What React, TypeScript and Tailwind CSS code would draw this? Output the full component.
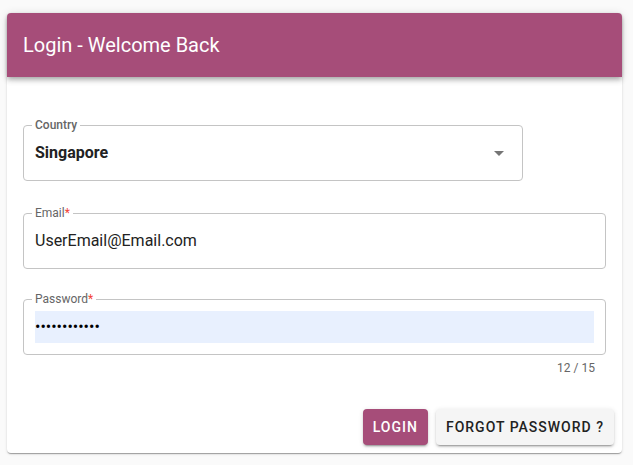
import React from 'react';

const font = { fontFamily: 'Roboto, "Noto Sans", sans-serif' };

const FieldLabel = ({ text, required, medium }: { text: string; required?: boolean; medium?: boolean }) => (
  <span
    className={`absolute -top-[7px] left-[8px] bg-white px-[3px] text-[12px] leading-[12px] text-[#666] ${medium ? 'font-medium' : ''}`}
  >
    {text}
    {required && <span className="text-[#f44336]">*</span>}
  </span>
);

const App = () => {
  return (
    <div className="min-h-[465px] bg-[#fafafa] pl-[7px] pt-[13px]" style={font}>
      <div className="w-[615px] rounded-[4px] bg-white shadow-[0_2px_1px_-1px_rgba(0,0,0,0.2),0_1px_1px_0_rgba(0,0,0,0.14),0_1px_3px_0_rgba(0,0,0,0.12)]">
        <div className="flex h-[64px] items-center rounded-t-[4px] bg-[#a64d79] px-4 shadow-[0_2px_4px_-1px_rgba(0,0,0,0.2),0_4px_5px_0_rgba(0,0,0,0.14),0_1px_10px_0_rgba(0,0,0,0.12)]">
          <h1 className="text-[20px] font-normal text-white">Login - Welcome Back</h1>
        </div>

        <div className="px-4 pt-[48px]">
          {/* Country select */}
          <div className="relative flex h-[56px] w-[500px] items-center rounded-[4px] border border-[#c4c4c4] px-[11px]">
            <FieldLabel text="Country" medium />
            <span className="text-[16px] font-bold text-[#222]">Singapore</span>
            <svg
              className="absolute right-[11px] top-1/2 -translate-y-1/2"
              width="24"
              height="24"
              viewBox="0 0 24 24"
            >
              <path d="M7 10l5 5 5-5z" fill="#757575" />
            </svg>
          </div>

          {/* Email */}
          <div className="relative mt-[32px] flex h-[56px] items-center rounded-[4px] border border-[#c4c4c4] px-[11px]">
            <FieldLabel text="Email" required />
            <span className="text-[16px] text-[#222]">UserEmail@Email.com</span>
          </div>

          {/* Password */}
          <div className="relative mt-[30px] h-[56px] rounded-[4px] border border-[#c4c4c4] p-[11px]">
            <FieldLabel text="Password" required />
            <div className="flex h-[32px] items-center bg-[#e8f0fe] text-[16px] leading-none text-black">
              ••••••••••••
            </div>
          </div>
          <div className="mt-[3px] pr-[11px] text-right text-[12px] leading-[20px] text-[#666]">12 / 15</div>
        </div>

        <div className="mt-[31px] flex justify-end gap-2 p-2 pt-0">
          <button className="h-[36px] rounded-[4px] bg-[#a64d79] px-[10px] text-[14px] font-medium uppercase tracking-[1px] text-white shadow-[0_3px_1px_-2px_rgba(0,0,0,0.2),0_2px_2px_0_rgba(0,0,0,0.14),0_1px_5px_0_rgba(0,0,0,0.12)]">
            Login
          </button>
          <button className="h-[36px] rounded-[4px] bg-[#f5f5f5] px-[10px] text-[14px] font-medium uppercase tracking-[1px] text-[#222] shadow-[0_3px_1px_-2px_rgba(0,0,0,0.2),0_2px_2px_0_rgba(0,0,0,0.14),0_1px_5px_0_rgba(0,0,0,0.12)]">
            Forgot Password ?
          </button>
        </div>
      </div>
    </div>
  );
};

export default App;
